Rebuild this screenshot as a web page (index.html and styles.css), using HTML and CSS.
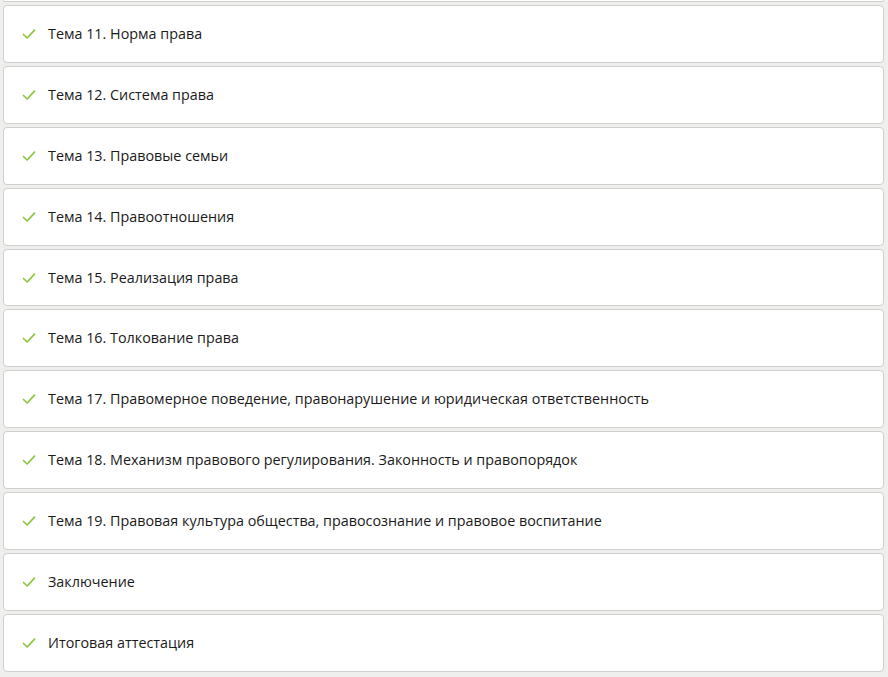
FILE: index.html
```html
<!DOCTYPE html>
<html lang="ru">
<head>
<meta charset="utf-8">
<title>Темы</title>
<link rel="stylesheet" href="styles.css">
</head>
<body>
<div class="prev-edge" aria-hidden="true"></div>
<ul class="topics">
  <li class="topic"><span class="check"><svg viewBox="0 0 14 14" width="14" height="14"><path d="M1.5 7.5 L5.2 11 L12.5 3.2" fill="none" stroke="#8cc63f" stroke-width="1.7" stroke-linecap="round" stroke-linejoin="round"/></svg></span><span class="title">Тема 11. Норма права</span></li>
  <li class="topic"><span class="check"><svg viewBox="0 0 14 14" width="14" height="14"><path d="M1.5 7.5 L5.2 11 L12.5 3.2" fill="none" stroke="#8cc63f" stroke-width="1.7" stroke-linecap="round" stroke-linejoin="round"/></svg></span><span class="title">Тема 12. Система права</span></li>
  <li class="topic"><span class="check"><svg viewBox="0 0 14 14" width="14" height="14"><path d="M1.5 7.5 L5.2 11 L12.5 3.2" fill="none" stroke="#8cc63f" stroke-width="1.7" stroke-linecap="round" stroke-linejoin="round"/></svg></span><span class="title">Тема 13. Правовые семьи</span></li>
  <li class="topic"><span class="check"><svg viewBox="0 0 14 14" width="14" height="14"><path d="M1.5 7.5 L5.2 11 L12.5 3.2" fill="none" stroke="#8cc63f" stroke-width="1.7" stroke-linecap="round" stroke-linejoin="round"/></svg></span><span class="title">Тема 14. Правоотношения</span></li>
  <li class="topic"><span class="check"><svg viewBox="0 0 14 14" width="14" height="14"><path d="M1.5 7.5 L5.2 11 L12.5 3.2" fill="none" stroke="#8cc63f" stroke-width="1.7" stroke-linecap="round" stroke-linejoin="round"/></svg></span><span class="title">Тема 15. Реализация права</span></li>
  <li class="topic"><span class="check"><svg viewBox="0 0 14 14" width="14" height="14"><path d="M1.5 7.5 L5.2 11 L12.5 3.2" fill="none" stroke="#8cc63f" stroke-width="1.7" stroke-linecap="round" stroke-linejoin="round"/></svg></span><span class="title">Тема 16. Толкование права</span></li>
  <li class="topic"><span class="check"><svg viewBox="0 0 14 14" width="14" height="14"><path d="M1.5 7.5 L5.2 11 L12.5 3.2" fill="none" stroke="#8cc63f" stroke-width="1.7" stroke-linecap="round" stroke-linejoin="round"/></svg></span><span class="title">Тема 17. Правомерное поведение, правонарушение и юридическая ответственность</span></li>
  <li class="topic"><span class="check"><svg viewBox="0 0 14 14" width="14" height="14"><path d="M1.5 7.5 L5.2 11 L12.5 3.2" fill="none" stroke="#8cc63f" stroke-width="1.7" stroke-linecap="round" stroke-linejoin="round"/></svg></span><span class="title">Тема 18. Механизм правового регулирования. Законность и правопорядок</span></li>
  <li class="topic"><span class="check"><svg viewBox="0 0 14 14" width="14" height="14"><path d="M1.5 7.5 L5.2 11 L12.5 3.2" fill="none" stroke="#8cc63f" stroke-width="1.7" stroke-linecap="round" stroke-linejoin="round"/></svg></span><span class="title">Тема 19. Правовая культура общества, правосознание и правовое воспитание</span></li>
  <li class="topic"><span class="check"><svg viewBox="0 0 14 14" width="14" height="14"><path d="M1.5 7.5 L5.2 11 L12.5 3.2" fill="none" stroke="#8cc63f" stroke-width="1.7" stroke-linecap="round" stroke-linejoin="round"/></svg></span><span class="title">Заключение</span></li>
  <li class="topic"><span class="check"><svg viewBox="0 0 14 14" width="14" height="14"><path d="M1.5 7.5 L5.2 11 L12.5 3.2" fill="none" stroke="#8cc63f" stroke-width="1.7" stroke-linecap="round" stroke-linejoin="round"/></svg></span><span class="title">Итоговая аттестация</span></li>
</ul>
</body>
</html>
```
FILE: styles.css
```css
html, body {
  margin: 0;
  padding: 0;
  background: #efefed;
  overflow: hidden;
}
body {
  font-family: "Open Sans", "Noto Sans", Arial, sans-serif;
  color: #1a1a1a;
}
.prev-edge {
  box-sizing: border-box;
  margin-left: 3px;
  width: 881px;
  height: 2px;
  background: #fff;
  border: 1px solid #cfcfcd;
  border-top: none;
  border-radius: 0 0 4px 4px;
}
.topics {
  list-style: none;
  margin: 3px 0 0 3px;
  padding: 0;
  width: 881px;
  display: flex;
  flex-direction: column;
  gap: 3px;
}
.topic {
  box-sizing: border-box;
  height: 57.9px;
  background: #fff;
  border: 1px solid #cfcfcd;
  border-radius: 4px;
  display: flex;
  align-items: center;
  padding-left: 18px;
  gap: 12px;
}
.check {
  display: flex;
  width: 14px;
  height: 14px;
}
.title {
  font-size: 14.35px;
  line-height: 20px;
}
```
